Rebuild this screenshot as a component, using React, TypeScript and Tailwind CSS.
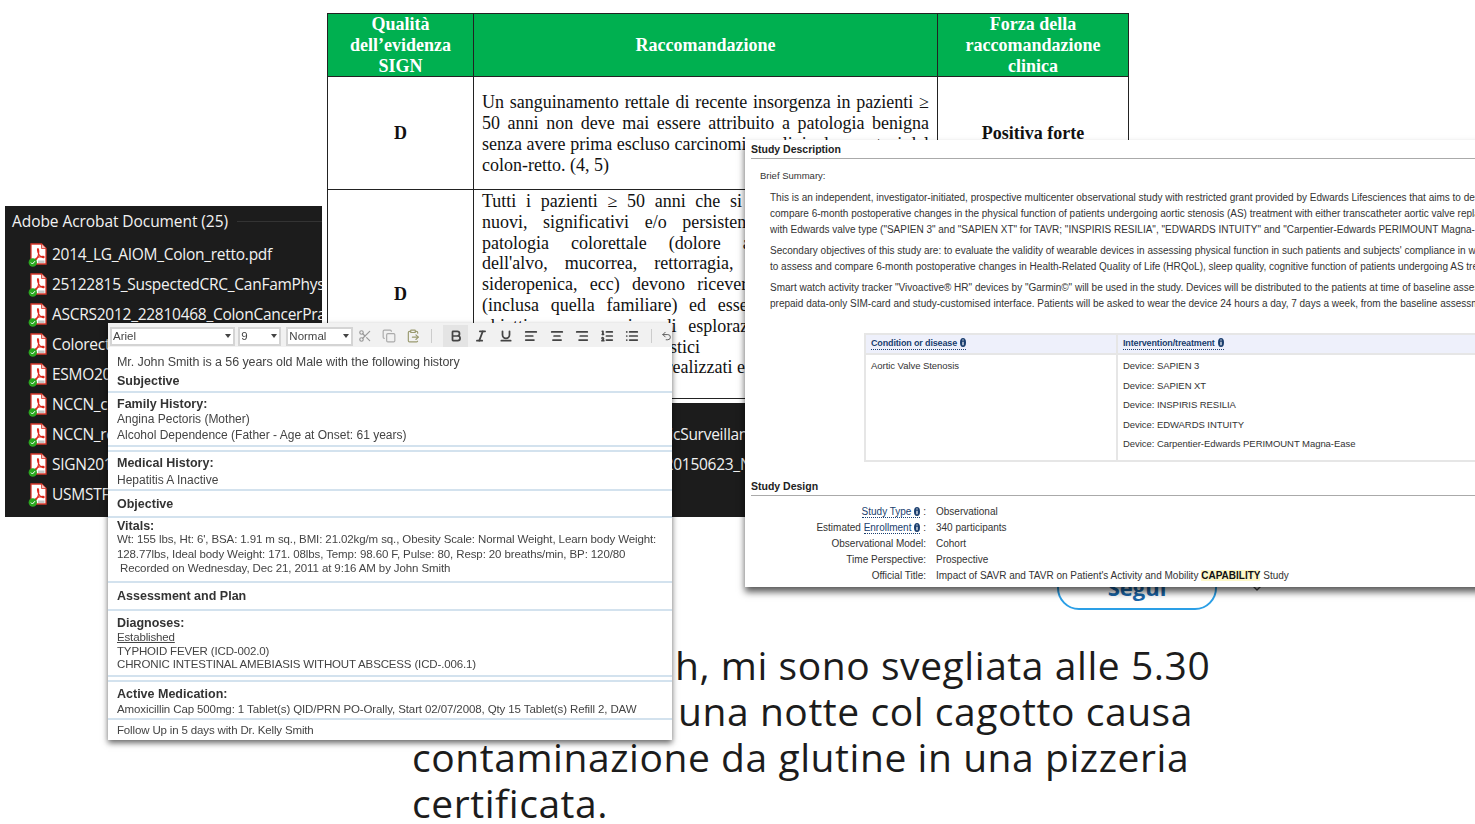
import {
  AlignCenter,
  AlignLeft,
  AlignRight,
  Bold,
  ChevronDown,
  ClipboardPaste,
  Copy,
  Italic,
  List,
  ListOrdered,
  Scissors,
  Underline,
  Undo2,
} from 'lucide-react';

const files = [
  '2014_LG_AIOM_Colon_retto.pdf',
  '25122815_SuspectedCRC_CanFamPhysician.pdf',
  'ASCRS2012_22810468_ColonCancerPractice.pdf',
  'Colorectal_Cancer_Screening_2015.pdf',
  'ESMO2013_Colon_Cancer.pdf',
  'NCCN_colon_2016.pdf',
  'NCCN_rectal_cancer_screening_and_treatment_guidelines_version_2_2_v3_2016_OncologicSurveillance.pdf',
  'SIGN2011_126_Diagnosis_and_managements_of_colorectal_cancers_guideline_updated_20150623_NICE.pdf',
  'USMSTF2012_Colonoscopy.pdf',
];

const row1 = [
  'Un sanguinamento rettale di recente insorgenza in pazienti ≥',
  '50 anni non deve mai essere attribuito a patologia benigna',
  'senza avere prima escluso carcinomi o polipi adenomatosi del',
];

const row2 = [
  'Tutti i pazienti ≥ 50 anni che si presentano con sintomi',
  'nuovi, significativi e/o persistenti suggestivi di unica',
  'patologia colorettale (dolore addominale, alterazioni',
  "dell'alvo, mucorrea, rettorragia, tenesmo, anemia rara",
  "sideropenica, ecc) devono ricevere un'anamnesi accurata",
  '(inclusa quella familiare) ed essere sottoposti ad esame',
  'obiettivo comprensivo di esplorazione rettale. Gli esami',
];

const toolbarIcons = [
  { Icon: Bold, active: true },
  { Icon: Italic },
  { Icon: Underline },
  { Icon: AlignLeft },
  { Icon: AlignCenter },
  { Icon: AlignRight },
  { Icon: ListOrdered },
  { Icon: List },
];

const PdfIcon = () => (
  <svg width="20" height="24" viewBox="0 0 20 24" className="shrink-0">
    <path d="M3 1h10.500l4.500 4.500v15.500h-15z" fill="#fff" stroke="#d8362a" strokeWidth="1.300" />
    <path d="M13.500 1v4.500h4.500" fill="#f3c5c0" stroke="#d8362a" strokeWidth="0.800" />
    <path
      d="M10 5.500c-.9 0 -.6 3 .7 5.500 1 2 2.700 3.400 4.500 3.600 1.300.1 1.300-1.200-.2-1.200-2.500 0-5.800 1-7.500 2.600-.7.700-.3 1.200.4 1 1.600-1.500 3.400-6.300 2.700-10.200-.1-.7-.2-1.300-.6-1.300z"
      fill="none"
      stroke="#e0281c"
      strokeWidth="1.100"
    />
    <rect x="10" y="17.500" width="6.500" height="2.500" fill="#c4c4c4" />
    <circle cx="4.800" cy="19.500" r="4.200" fill="#2aa81f" />
    <path d="M2.900 19.500l1.500 1.500 2.600-2.800" fill="none" stroke="#fff" strokeWidth="1" />
  </svg>
);

const Select = ({ label, width }: { label: string; width: string }) => (
  <div className={`${width} h-[19px] border-2 border-[#d4d4d4] bg-white flex items-center justify-between pl-[1px] pr-[2px] text-[#444] text-[11.500px]`}>
    <span>{label}</span>
    <span className="w-0 h-0 border-x-[3.500px] border-x-transparent border-t-[4px] border-t-[#444]" />
  </div>
);

const Section = ({ className, children }: { className: string; children: React.ReactNode }) => (
  <div className={`border-b-2 border-[#d3e2ee] px-[9px] ${className}`}>{children}</div>
);

const Heading = ({ children }: { children: React.ReactNode }) => (
  <div className="font-bold text-[#333] text-[12.500px] leading-[16px]">{children}</div>
);

const InfoDot = () => (
  <svg width="6" height="9" viewBox="0 0 6 9" className="inline-block ml-[3px] align-[-1px]">
    <ellipse cx="3" cy="4.500" rx="3" ry="4.500" fill="#1a3e6e" />
    <path d="M3 1.500v1M3 3.800v3.500" stroke="#fff" strokeWidth="1.200" />
  </svg>
);

const DesignRow = ({ label, children }: { label: React.ReactNode; children: React.ReactNode }) => (
  <div className="flex h-4 items-center">
    <div className="w-[181px] shrink-0 text-right text-[#333]">{label}</div>
    <div className="ml-[10px] whitespace-nowrap text-[#333]">{children}</div>
  </div>
);

const App = () => {
  return (
    <div className="relative w-[1475px] h-[824px] overflow-hidden bg-white">
      {/* tweet text behind the windows */}
      <div className="absolute left-[412px] top-[642px] w-[900px] font-['Open_Sans',sans-serif] text-[39px] leading-[46px] text-[#1c1c1c] tracking-[0.560px] whitespace-nowrap">
        <div className="pl-[263px]">h, mi sono svegliata alle 5.30</div>
        <div className="pl-[266px]">una notte col cagotto causa</div>
        <div>contaminazione da glutine in una pizzeria</div>
        <div>certificata.</div>
      </div>

      {/* follow button */}
      <div className="absolute left-[1057px] top-[565px] w-[160px] h-[45px] rounded-[22px] border-2 border-[#2b9fe6] flex items-center justify-center font-['Open_Sans',sans-serif] font-bold text-[22px] text-[#1a66a8]">
        Segui
      </div>
      <ChevronDown className="absolute left-[1249px] top-[580px] w-4 h-4 text-[#444]" />

      {/* explorer panel */}
      <div className="absolute left-[5px] top-[206px] w-[740px] h-[311px] bg-[#1c1c1c] overflow-hidden font-['Open_Sans',sans-serif] text-[#f2f2f2]">
        <div className="flex items-center h-[31px] pl-[7px] text-[15.500px] tracking-[-0.070px]">
          <span>Adobe Acrobat Document (25)</span>
          <div className="ml-[9px] flex-1 h-px bg-[#333]" />
        </div>
        <div className="pl-[23px] pt-[3px]">
          {files.map((f) => (
            <div key={f} className="flex items-center h-[30px] gap-[4px] text-[15.500px] whitespace-nowrap">
              <PdfIcon />
              <span className="tracking-[-0.270px]">{f}</span>
            </div>
          ))}
        </div>
      </div>

      {/* guideline table */}
      <div className="absolute left-[322px] top-0 w-[820px] h-[403px] bg-white pl-[5px] pt-[13px] font-['Liberation_Serif',serif] text-[18px] leading-[21px] text-[#111]">
        <div className="w-[802px] border border-[#222] grid grid-cols-[146px_464px_190px] grid-rows-[63px_113px_208px]">
          <div className="bg-[#00b050] text-white font-bold text-center border-r border-b border-[#222] flex items-center justify-center pt-[1px]">
            <span>Qualità<br />dell’evidenza<br />SIGN</span>
          </div>
          <div className="bg-[#00b050] text-white font-bold text-center border-r border-b border-[#222] flex items-center justify-center pt-[1px]">
            Raccomandazione
          </div>
          <div className="bg-[#00b050] text-white font-bold text-center border-b border-[#222] flex items-center justify-center pt-[1px]">
            <span>Forza della<br />raccomandazione<br />clinica</span>
          </div>

          <div className="font-bold border-r border-b border-[#222] flex items-center justify-center">D</div>
          <div className="border-r border-b border-[#222] px-[8px] pt-[15px]">
            {row1.map((l) => (
              <div key={l} className="[text-align-last:justify] whitespace-nowrap">{l}</div>
            ))}
            <div>colon-retto. (4, 5)</div>
          </div>
          <div className="font-bold border-b border-[#222] flex items-center justify-center">Positiva forte</div>

          <div className="font-bold border-r border-[#222] flex items-center justify-center">D</div>
          <div className="border-r border-[#222] px-[8px] pt-[1px] leading-[20.800px]">
            {row2.map((l) => (
              <div key={l} className="[text-align-last:justify] whitespace-nowrap">{l}</div>
            ))}
            <div className="text-right pr-[229px]">ad accertamenti diagnostici</div>
            <div className="text-right pr-[184px]">esami realizzati e</div>
          </div>
          <div />
        </div>
      </div>

      {/* EMR note */}
      <div className="absolute left-[108px] top-[323px] w-[564px] h-[417px] bg-white overflow-hidden shadow-[0_3px_6px_rgba(0,0,0,0.6)] font-['Liberation_Sans',sans-serif] text-[#444] text-[12px] leading-[15px] blur-[0.400px]">
        <div className="h-[24px] bg-[#f1f1f1] flex items-center pl-[2px] pt-[2px]">
          <Select label="Ariel" width="w-[133px]" />
          <div className="ml-[3px]"><Select label="9" width="w-[43px]" /></div>
          <div className="ml-[5px]"><Select label="Normal" width="w-[67px]" /></div>
          <div className="flex items-center blur-[0.700px]">
            <Scissors className="ml-[5px] w-[14px] h-[14px] text-[#999]" />
            <Copy className="ml-[10px] w-[14px] h-[14px] text-[#aaa]" />
            <ClipboardPaste className="ml-[10px] w-[14px] h-[14px] text-[#9a9a70]" />
          </div>
          <div className="ml-[11px] w-px h-[14px] bg-[#ccc]" />
          <div className="ml-[11px] flex items-center">
            {toolbarIcons.map(({ Icon, active }, i) => (
              <div key={i} className={`w-[25.200px] h-[22px] flex items-center justify-center ${active ? 'bg-[#e4e4e4]' : ''}`}>
                <Icon className="w-[14px] h-[14px] text-[#444] blur-[0.700px]" strokeWidth={3} />
              </div>
            ))}
          </div>
          <div className="ml-[6px] w-px h-[14px] bg-[#ccc]" />
          <Undo2 className="ml-[9px] w-[12px] h-[14px] text-[#555] blur-[0.700px]" />
        </div>

        <Section className="h-[46px] pt-[7px]">
          <div className="text-[12.500px] leading-[16px] tracking-[-0.075px]">Mr. John Smith is a 56 years old Male with the following history</div>
          <div className="mt-[3px]"><Heading>Subjective</Heading></div>
        </Section>
        <Section className="h-[54px] pt-[3px]">
          <Heading>Family History:</Heading>
          <div>Angina Pectoris (Mother)</div>
          <div className="pt-[1px]">Alcohol Dependence (Father - Age at Onset: 61 years)</div>
        </Section>
        <Section className="h-[41px] mt-[3px] border-t-2 pt-[3px]">
          <Heading>Medical History:</Heading>
          <div className="pt-[2px]">Hepatitis A Inactive</div>
        </Section>
        <Section className="h-[27px] pt-[5px]">
          <Heading>Objective</Heading>
        </Section>
        <Section className="h-[65px]">
          <Heading>Vitals:</Heading>
          <div className="-mt-[2px] text-[11.500px] leading-[14.500px] tracking-[-0.110px] whitespace-nowrap">
            <div>Wt: 155 lbs, Ht: 6', BSA: 1.91 m sq., BMI: 21.02kg/m sq., Obesity Scale: Normal Weight, Learn body Weight:</div>
            <div>128.77lbs, Ideal body Weight: 171. 08lbs, Temp: 98.60 F, Pulse: 80, Resp: 20 breaths/min, BP: 120/80</div>
            <div className="pl-[3px]">Recorded on Wednesday, Dec 21, 2011 at 9:16 AM by John Smith</div>
          </div>
        </Section>
        <Section className="h-[28px] pt-[5px]">
          <Heading>Assessment and Plan</Heading>
        </Section>
        <Section className="h-[66px] pt-[4px]">
          <Heading>Diagnoses:</Heading>
          <div className="text-[11.500px] leading-[13.500px] tracking-[-0.150px]">
            <div className="underline">Established</div>
            <div>TYPHOID FEVER (ICD-002.0)</div>
            <div>CHRONIC INTESTINAL AMEBIASIS WITHOUT ABSCESS (ICD-.006.1)</div>
          </div>
        </Section>
        <Section className="h-[40px] mt-[3px] border-t-2 pt-[3px]">
          <div className="pt-[1px]"><Heading>Active Medication:</Heading></div>
          <div className="text-[11.500px] tracking-[-0.110px] whitespace-nowrap">Amoxicillin Cap 500mg: 1 Tablet(s) QID/PRN PO-Orally, Start 02/07/2008, Qty 15 Tablet(s) Refill 2, DAW</div>
        </Section>
        <div className="px-[9px] pt-[3px] text-[11.500px] tracking-[-0.150px]">Follow Up in 5 days with Dr. Kelly Smith</div>
      </div>

      {/* study record */}
      <div className="absolute left-[745px] top-[140px] w-[760px] h-[447px] bg-white shadow-[0_5px_7px_rgba(0,0,0,0.65)] overflow-hidden font-['Liberation_Sans',sans-serif] text-[10px] text-[#333]">
        <div className="ml-[6px] h-[19px] pt-[2px] border-b border-[#aaa] flex items-center font-bold text-[10.500px] text-[#222]">Study Description</div>
        <div className="ml-[15px] mt-[10px] leading-[14px] text-[9.500px]">Brief Summary:</div>
        <div className="ml-[25px] mt-[7px] leading-[16px] whitespace-nowrap">
          <div>This is an independent, investigator-initiated, prospective multicenter observational study with restricted grant provided by Edwards Lifesciences that aims to describe and</div>
          <div>compare 6-month postoperative changes in the physical function of patients undergoing aortic stenosis (AS) treatment with either transcatheter aortic valve replacement</div>
          <div>with Edwards valve type ("SAPIEN 3" and "SAPIEN XT" for TAVR; "INSPIRIS RESILIA", "EDWARDS INTUITY" and "Carpentier-Edwards PERIMOUNT Magna-Ease"</div>
          <div className="mt-[5px]">Secondary objectives of this study are: to evaluate the validity of wearable devices in assessing physical function in such patients and subjects' compliance in wearing</div>
          <div>to assess and compare 6-month postoperative changes in Health-Related Quality of Life (HRQoL), sleep quality, cognitive function of patients undergoing AS treatment</div>
          <div className="mt-[5px]">Smart watch activity tracker "Vivoactive® HR" devices by "Garmin©" will be used in the study. Devices will be distributed to the patients at time of baseline assessment</div>
          <div>prepaid data-only SIM-card and study-customised interface. Patients will be asked to wear the device 24 hours a day, 7 days a week, from the baseline assessment</div>
        </div>

        <div className="ml-[119px] mt-[21px] w-[641px] h-[129px] border-2 border-[#e6e6e6] grid grid-cols-[252px_1fr] grid-rows-[20px_1fr] text-[9.500px] tracking-[-0.050px]">
          <div className="bg-[#eef0fb] border-r-2 border-b-2 border-[#e6e6e6] pl-[5px] flex items-center font-bold text-[#1a3e6e] text-[9px] tracking-[-0.150px]">
            <span className="border-b border-dotted border-[#1a3e6e] leading-[11px]">Condition or disease<InfoDot /></span>
          </div>
          <div className="bg-[#eef0fb] border-b-2 border-[#e6e6e6] pl-[5px] flex items-center font-bold text-[#1a3e6e] text-[9px] tracking-[-0.150px]">
            <span className="border-b border-dotted border-[#1a3e6e] leading-[11px]">Intervention/treatment<InfoDot /></span>
          </div>
          <div className="border-r-2 border-[#e6e6e6] pl-[5px] pt-[4px] leading-[14px]">Aortic Valve Stenosis</div>
          <div className="pl-[5px] pt-[4px] leading-[14px] flex flex-col gap-[5.500px]">
            <div>Device: SAPIEN 3</div>
            <div>Device: SAPIEN XT</div>
            <div>Device: INSPIRIS RESILIA</div>
            <div>Device: EDWARDS INTUITY</div>
            <div>Device: Carpentier-Edwards PERIMOUNT Magna-Ease</div>
          </div>
        </div>

        <div className="ml-[6px] mt-[15px] h-[19px] pt-[2px] border-b border-[#aaa] flex items-center font-bold text-[10.500px] text-[#222]">Study Design</div>
        <div className="mt-[7px]">
          <DesignRow label={<><span className="text-[#1a3e6e] border-b border-dotted border-[#1a3e6e]">Study Type<InfoDot /></span> :</>}>Observational</DesignRow>
          <DesignRow label={<>Estimated <span className="text-[#1a3e6e] border-b border-dotted border-[#1a3e6e]">Enrollment<InfoDot /></span> :</>}>340 participants</DesignRow>
          <DesignRow label="Observational Model:">Cohort</DesignRow>
          <DesignRow label="Time Perspective:">Prospective</DesignRow>
          <DesignRow label="Official Title:">
            Impact of SAVR and TAVR on Patient's Activity and Mobility <span className="font-bold text-[#111] bg-[#fdf8c8]">CAPABILITY</span> Study
          </DesignRow>
        </div>
      </div>
    </div>
  );
};

export default App;
